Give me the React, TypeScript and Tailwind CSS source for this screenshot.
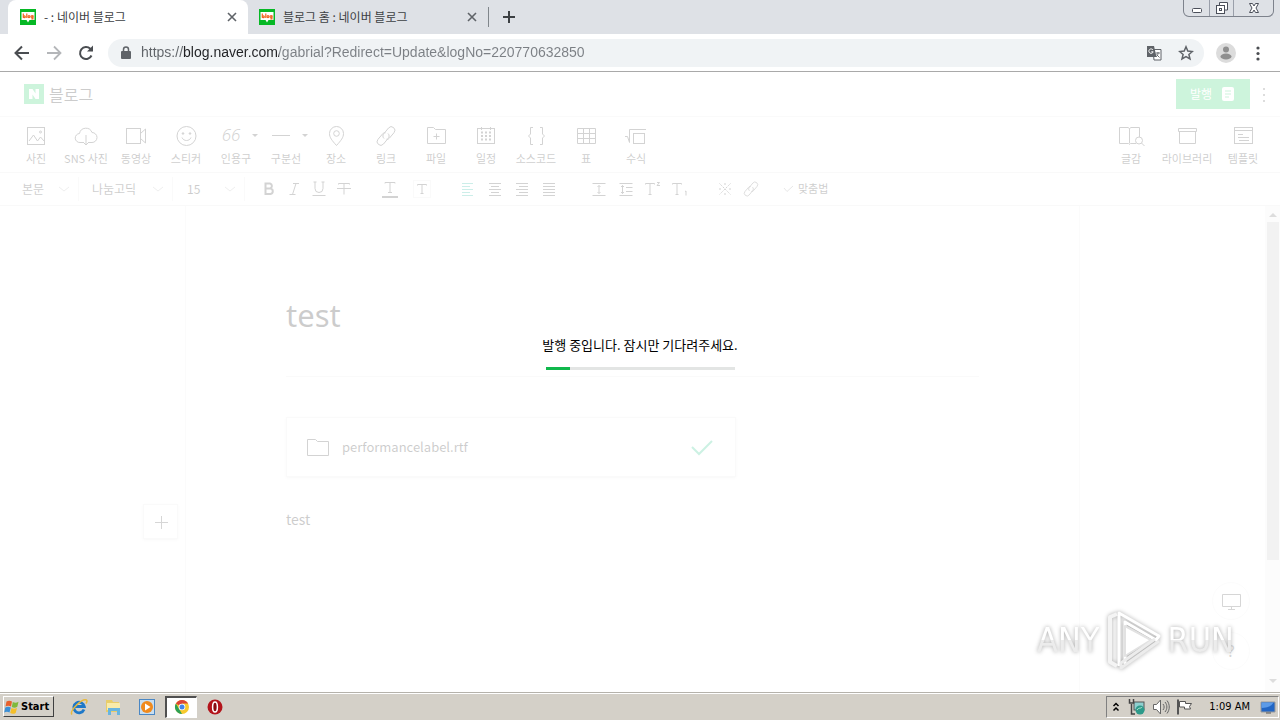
import type { ReactNode } from 'react';
import clsx from 'clsx';

type IconProps = { children: ReactNode; className?: string; box?: string };

function Line({ children, className = 'size-6', box = '0 0 24 24' }: IconProps) {
  return (
    <svg
      viewBox={box}
      className={className}
      fill="none"
      stroke="currentColor"
      strokeWidth="1"
      aria-hidden="true"
    >
      {children}
    </svg>
  );
}

function BlogFavicon() {
  return (
    <svg viewBox="0 0 16 16" className="size-4 shrink-0" aria-hidden="true">
      <rect width="16" height="16" fill="#06b825" />
      <path d="M1.5 3h13v8H9.5L8 13.5 6.5 11h-5z" fill="#fff" />
      <g fill="none" stroke="#f26522" strokeWidth="1.2">
        <path d="M3.3 4.5v4.3M6.8 4.5v4.5" />
        <circle cx="4.4" cy="7.7" r="0.9" />
        <circle cx="9" cy="7.6" r="1" />
        <path d="M12.9 6.3v3.5h-1.6" />
        <circle cx="12" cy="7.4" r="0.9" />
      </g>
    </svg>
  );
}

function Tab({ title, active }: { title: string; active?: boolean }) {
  return (
    <div
      className={clsx(
        'flex h-full w-60 items-center rounded-t-lg pr-2 text-[12px] text-[#3c4043]',
        active ? 'bg-white pl-3' : 'pl-[11px]',
      )}
    >
      <BlogFavicon />
      <button role="tab" aria-selected={!!active} className="ml-2 flex-1 truncate text-left">
        {title}
      </button>
      <button aria-label="Close tab" className="text-[#5f6368]">
        <svg viewBox="0 0 16 16" className="size-4" stroke="currentColor" strokeWidth="1.6">
          <path d="m4 4 8 8M12 4l-8 8" />
        </svg>
      </button>
    </div>
  );
}

function WindowControls() {
  return (
    <div className="mr-[6px] flex h-[17px] self-start rounded-b-md border border-t-0 border-[#7d828c] text-[#4b4f5a]">
      <button aria-label="Minimize" className="flex w-[25px] items-center justify-center">
        <Line className="h-4 w-4" box="0 0 16 16">
          <rect x="3.5" y="8.5" width="9" height="4" rx="1" fill="#fff" />
        </Line>
      </button>
      <button
        aria-label="Restore"
        className="flex w-[25px] items-center justify-center border-x border-[#9a9faa]"
      >
        <Line className="h-4 w-4" box="0 0 16 16">
          <path d="M5.500 5V2.500h8V10H11" fill="#fff" />
          <rect x="2.500" y="5.500" width="8" height="8" fill="#fff" />
          <rect x="5.500" y="8.500" width="2" height="2" />
        </Line>
      </button>
      <button aria-label="Close" className="flex w-[39px] items-center justify-center">
        <Line className="h-4 w-4" box="0 0 16 16">
          <path
            d="M3.500 3.500h3l1.500 2.500 1.500-2.500h3L10 8l2.500 4.500h-3L8 10l-1.500 2.500h-3L6 8z"
            fill="#fff"
          />
        </Line>
      </button>
    </div>
  );
}

function BrowserChrome() {
  return (
    <header>
      <div className="flex h-[34px] items-center bg-[#dee1e6] pl-2">
        <div role="tablist" className="flex h-full">
          <Tab title="- : 네이버 블로그" active />
          <Tab title="블로그 홈 : 네이버 블로그" />
        </div>
        <span className="h-5 w-px bg-[#80868b]" />
        <button aria-label="New tab" className="ml-[10px] text-[#3c4043]">
          <svg viewBox="0 0 20 20" className="size-5" stroke="currentColor" strokeWidth="2">
            <path d="M10 4v12M4 10h12" />
          </svg>
        </button>
        <div className="flex-1" />
        <WindowControls />
      </div>
      <div className="flex h-[38px] items-center border-b border-[#a9a9a9] bg-white pl-3 pr-3 text-[#5f6368]">
        <button aria-label="Back" className="text-[#4a4d51]">
          <svg viewBox="0 0 20 20" className="size-5" fill="none" stroke="currentColor" strokeWidth="2">
            <path d="M17 10H4M10 3.500 3.500 10l6.500 6.500" />
          </svg>
        </button>
        <button aria-label="Forward" className="ml-3 text-[#b4b6b9]">
          <svg viewBox="0 0 20 20" className="size-5" fill="none" stroke="currentColor" strokeWidth="1.800">
            <path d="M3 10h13M10 3.500l6.500 6.500-6.500 6.500" />
          </svg>
        </button>
        <button aria-label="Reload" className="ml-3 text-[#4a4d51]">
          <svg viewBox="0 0 20 20" className="size-5" fill="none" stroke="currentColor" strokeWidth="2">
            <path d="M15.500 12.500A6 6 0 1 1 14.300 5.800L16 7.500" />
            <path d="M17 2.500v6h-6z" fill="currentColor" stroke="none" />
          </svg>
        </button>
        <div className="ml-3 flex h-7 flex-1 items-center rounded-full bg-[#f0f3f5] pl-3 pr-[10px]">
          <svg viewBox="0 0 12 16" className="h-4 w-3" aria-hidden="true">
            <rect x="1" y="6" width="10" height="8" rx="1" fill="#5f6368" />
            <path d="M3.500 6.500V4.500a2.500 2.500 0 0 1 5 0v2" fill="none" stroke="#5f6368" strokeWidth="1.500" />
          </svg>
          <input
            aria-label="Address"
            readOnly
            value="https://blog.naver.com/gabrial?Redirect=Update&logNo=220770632850"
            className="ml-[9px] min-w-0 flex-1 bg-[linear-gradient(90deg,#5f6368_42px,#202124_42px,#202124_138px,#7b7f84_138px)] bg-clip-text font-['Liberation_Sans'] text-[14px] text-transparent outline-none"
          />
          <button aria-label="Translate" className="size-4">
            <svg viewBox="0 0 16 16" className="size-4">
              <path d="M7 4.500h8v10.500H8z" fill="#fff" stroke="#5f6368" />
              <path d="M1 1h7l2.500 11H1z" fill="#5f6368" />
              <path d="M7 5A2.200 2.200 0 1 0 7.200 6.800H5.300" fill="none" stroke="#fff" />
              <path d="M9.500 8h4.500M12 7v1c0 2-1 3-2 4M10.500 9.500l3 3" fill="none" stroke="#5f6368" strokeWidth="0.900" />
            </svg>
          </button>
          <button aria-label="Bookmark" className="ml-4 size-4">
            <svg viewBox="0 0 16 16" className="size-4" fill="none" stroke="#5f6368" strokeWidth="1.500">
              <path d="m8 1.800 1.800 4.300 4.600.4-3.500 3 1.100 4.500L8 11.600 4 14l1.100-4.500-3.500-3 4.600-.4z" />
            </svg>
          </button>
        </div>
        <button aria-label="Profile" className="ml-3 size-5">
          <svg viewBox="0 0 20 20" className="size-5">
            <circle cx="10" cy="10" r="10" fill="#dcdcdc" />
            <circle cx="10" cy="6.500" r="3" fill="#8f8f8f" />
            <ellipse cx="10" cy="13.500" rx="5.500" ry="3" fill="#8f8f8f" />
          </svg>
        </button>
        <button aria-label="Menu" className="ml-3 size-5">
          <svg viewBox="0 0 20 20" className="size-5" fill="#4a4d51">
            <circle cx="10" cy="5" r="1.600" />
            <circle cx="10" cy="10.500" r="1.600" />
            <circle cx="10" cy="16" r="1.600" />
          </svg>
        </button>
      </div>
    </header>
  );
}

const link = (
  <>
    <path d="M10 14.500c-1.500-1.500-1.500-3.500 0-5l4.500-5.500a3.600 3.600 0 0 1 5.500 4.700L15.500 14c-1 1.200-2 1.500-3 1.200" />
    <path d="M14 9.500c1.500 1.500 1.500 3.500 0 5L9.500 20A3.600 3.600 0 0 1 4 15.300L8.500 10c1-1.200 2-1.500 3-1.200" />
  </>
);

const caret = <path d="M0 0h6L3 3z" fill="currentColor" stroke="none" />;

const insertTools: { label: string; icon: ReactNode }[] = [
  {
    label: '사진',
    icon: (
      <Line>
        <rect x="3.500" y="3.500" width="17" height="17" />
        <path d="m5 17 4.500-6 4 6 3-4 3.500 4" />
        <circle cx="16.500" cy="8" r="1" />
      </Line>
    ),
  },
  {
    label: 'SNS 사진',
    icon: (
      <Line>
        <path d="M9 18.500H6a4.500 4.500 0 0 1-.5-9 6.500 6.500 0 0 1 12.500-1 5 5 0 0 1 0 10h-3" />
        <path d="M12 11v10M9 18l3 3 3-3" />
      </Line>
    ),
  },
  {
    label: '동영상',
    icon: (
      <Line>
        <rect x="2.500" y="4.500" width="14" height="15" />
        <path d="M16.500 9.500 21.500 5v14l-5-4.500" />
      </Line>
    ),
  },
  {
    label: '스티커',
    icon: (
      <Line>
        <circle cx="12.500" cy="12" r="9.500" />
        <path d="M8 13.500c1.500 4 7.500 4 9 0" />
        <circle cx="9" cy="9.500" r="0.800" fill="currentColor" />
        <circle cx="16" cy="9.500" r="0.800" fill="currentColor" />
      </Line>
    ),
  },
  {
    label: '인용구',
    icon: (
      <span className="flex h-6 items-center gap-3 pl-2 pb-[2px]">
        <span className="font-['Noto_Sans'] text-[17px] font-light italic">66</span>
        <Line className="h-[3px] w-[6px]" box="0 0 6 3">{caret}</Line>
      </span>
    ),
  },
  {
    label: '구분선',
    icon: (
      <span className="flex h-6 items-center gap-3 pl-2 pb-[2px]">
        <span className="h-px w-[18px] bg-current" />
        <Line className="h-[3px] w-[6px]" box="0 0 6 3">{caret}</Line>
      </span>
    ),
  },
  {
    label: '장소',
    icon: (
      <Line>
        <path d="M12.500 21.500C8 16.500 5.500 13.500 5.500 9.500a7 7 0 0 1 14 0c0 4-2.500 7-7 12z" />
        <circle cx="12.500" cy="9.500" r="2.800" />
      </Line>
    ),
  },
  { label: '링크', icon: <Line>{link}</Line> },
  {
    label: '파일',
    icon: (
      <Line>
        <path d="M3.500 19.500v-16h6l2 2h10v14zM12.500 9.500v6M9.500 12.500h6" />
      </Line>
    ),
  },
  {
    label: '일정',
    icon: (
      <Line>
        <rect x="3.500" y="4.500" width="17" height="15" />
        <path d="M7.500 3v3M16.500 3v3" />
        <path d="M7 8.500h10.500M7 12h10.500M7 15.500h10.500" strokeWidth="2" strokeDasharray="2 2" />
      </Line>
    ),
  },
  {
    label: '소스코드',
    icon: (
      <Line>
        <path d="M9 3.500H6.500v6.500L4.500 12l2 2v6.500H9M16 3.500h2.500v6.500l2 2-2 2v6.500H16" />
      </Line>
    ),
  },
  {
    label: '표',
    icon: (
      <Line>
        <path d="M3.500 4.500h18v15h-18zM3.500 9.500h18M3.500 14.500h18M9.500 4.500v15M15.500 4.500v15" />
      </Line>
    ),
  },
  {
    label: '수식',
    icon: (
      <Line>
        <path d="M1 12.500h2.500l2 6v-13h16.500" />
        <rect x="9.500" y="9.500" width="11" height="10" />
      </Line>
    ),
  },
];

const sideTools: { label: string; icon: ReactNode }[] = [
  {
    label: '글감',
    icon: (
      <Line className="h-6 w-7" box="0 0 28 24">
        <path d="M12.500 4.500v15M19 19.500h-5.500l-1 1-1-1H2.500v-16H11l1.500 1 1.500-1h8.500V13" />
        <circle cx="22" cy="16.500" r="3.500" />
        <path d="m24.500 19 3 3" />
      </Line>
    ),
  },
  {
    label: '라이브러리',
    icon: (
      <Line>
        <path d="M3.500 4.500h18v3h-18zM4.500 7.500v12h16v-12" />
      </Line>
    ),
  },
  {
    label: '템플릿',
    icon: (
      <Line>
        <rect x="3.500" y="3.500" width="18" height="16" />
        <path d="M3.500 6.500h18M7 10.500h5M7 13.500h11M8 16.500h10" />
      </Line>
    ),
  },
];

function ToolButton({ label, icon, wide }: { label: string; icon: ReactNode; wide?: boolean }) {
  return (
    <button
      className={clsx(
        'flex flex-col items-center whitespace-nowrap text-[11px] leading-4 text-[#222]',
        wide ? 'w-14' : 'w-[50px]',
      )}
    >
      {icon}
      <span className="mt-[2px] text-black">{label}</span>
    </button>
  );
}

function FormatSelect({ label, value, className }: { label: string; value: string; className: string }) {
  return (
    <div className={clsx('flex h-6 items-center border-r border-[#e8e8e8] pr-2', className)}>
      <select
        aria-label={label}
        defaultValue={value}
        className="min-w-0 flex-1 appearance-none text-[12px] text-black outline-none"
      >
        <option>{value}</option>
      </select>
      <Line className="size-3 shrink-0 text-[#aaa]" box="0 0 12 12">
        <path d="m1 4 5 4 5-4" />
      </Line>
    </div>
  );
}

const serifT = 'M5 4.500V3.500h10v1M10 3.500v10M8 13.500h4';

const textStyles = [
  { label: '굵게', node: <path d="M6.500 4.500H11a2.600 2.600 0 0 1 0 5H6.500zM6.500 9.500h5a2.800 2.800 0 0 1 0 5.500h-5z" strokeWidth="2" /> },
  { label: '기울임꼴', node: <path d="M9 4.500h6M5.500 15.500h6M12 4.500l-3.500 11" /> },
  { label: '밑줄', node: <path d="M6 3v6.500a4 4 0 0 0 8 0V3M4.500 3h3M12.500 3h3M3.500 16.500h13" /> },
  { label: '취소선', node: <path d="M4.500 5.500v-1h11v1M10 4.500v11M3 9.500h14" /> },
];

const colorStyles = [
  {
    label: '글자색',
    node: (
      <>
        <path d={serifT} />
        <path d="M2 18h16" strokeWidth="2" />
      </>
    ),
  },
  {
    label: '글자 배경색',
    node: (
      <>
        <rect x="1.500" y="1.500" width="17" height="17" stroke="#e4e4e4" />
        <path d="M5.500 6.500v-1h9v1M10 5.500v9M8.500 14.500h3" />
      </>
    ),
  },
];

const aligns = [
  { label: '왼쪽 정렬', node: <path stroke="#00a98f" d="M4 4.500h11M4 7.500h8M4 10.500h11M4 13.500h8M4 16.500h11" /> },
  { label: '가운데 정렬', node: <path d="M4 4.500h12M6 7.500h8M4 10.500h12M6 13.500h8M4 16.500h12" /> },
  { label: '오른쪽 정렬', node: <path d="M4 4.500h12M7 7.500h9M4 10.500h12M7 13.500h9M4 16.500h12" /> },
  { label: '양쪽 정렬', node: <path d="M4 4.500h12M4 7.500h12M4 10.500h12M4 13.500h12M4 16.500h12" /> },
];

const spacings = [
  { label: '줄 간격', node: <path d="M3.500 4.500h13M3.500 16.500h13M10 6.500v8M8.500 8l1.500-1.500L11.500 8M8.500 13l1.500 1.500 1.500-1.500" /> },
  { label: '들여쓰기', node: <path d="M3.500 4.500h13M3.500 16.500h13M6.500 6.500v8M5 8l1.500-1.500L8 8M5 13l1.500 1.500L8 13M10 8.500h6.500M10 12.500h6.500" /> },
  { label: '위 첨자', node: <path d="M2.500 5.500v-1h9v1M7 4.500v11M5.500 15.500h3M14 3.500h2.500l-2.500 3h3" /> },
  { label: '아래 첨자', node: <path d="M2.500 5.500v-1h9v1M7 4.500v11M5.500 15.500h3M15 12.500l1-.5v4.500" /> },
];

const extras = [
  {
    label: '특수문자',
    node: (
      <>
        <path d="m4.500 4.500 11 11M15.500 4.500l-11 11" strokeDasharray="1.500 1" />
        <path d="M9 5h2M9 15h2M5 9v2M15 9v2" />
      </>
    ),
  },
  { label: '링크 추가', node: <g transform="translate(1 1) scale(.75)">{link}</g> },
];

function FormatGroup({
  items,
  className,
  cell,
}: {
  items: { label: string; node: ReactNode }[];
  className?: string;
  cell: string;
}) {
  return (
    <div className={clsx('flex text-[#222]', className)}>
      {items.map((item) => (
        <button key={item.label} aria-label={item.label} className={clsx('flex justify-center', cell)}>
          <Line className="size-5" box="0 0 20 20">{item.node}</Line>
        </button>
      ))}
    </div>
  );
}

function EditorHeader() {
  return (
    <>
      <div className="flex h-11 items-center pl-6 pr-[6px]">
        <a href="#" className="flex items-center text-[16px] leading-5 text-black">
          <svg viewBox="0 0 20 20" className="mr-[5px] size-5" aria-hidden="true">
            <rect width="20" height="20" fill="#03c750" />
            <path d="M5 5h3.500l3 4.500V5H15v10h-3.500l-3-4.500V15H5z" fill="#fff" />
          </svg>
          블로그
        </a>
        <button className="ml-auto flex h-[30px] w-[74px] items-center justify-center gap-2 bg-[#03c750] text-[12px] text-white">
          발행
          <svg viewBox="0 0 16 16" className="size-4" aria-hidden="true">
            <rect x="2" y="1" width="12" height="14" rx="2" fill="#fff" />
            <path d="M5 5h6M5 8h6M5 11h4" stroke="#03c750" />
          </svg>
        </button>
        <button aria-label="더보기" className="ml-1 size-5">
          <svg viewBox="0 0 20 20" className="size-5" fill="#555">
            <path d="M9 4h2v2H9zM9 10h2v2H9zM9 16h2v2H9z" />
          </svg>
        </button>
      </div>
      <div className="flex h-14 justify-between border-t border-[#e5e5e5] pl-[11px] pr-[9px] pt-[7px]">
        <div className="flex">
          {insertTools.map((tool) => (
            <ToolButton key={tool.label} {...tool} />
          ))}
        </div>
        <div className="flex">
          {sideTools.map((tool) => (
            <ToolButton key={tool.label} {...tool} wide />
          ))}
        </div>
      </div>
      <div className="flex h-[34px] items-center border-y border-[#e0e0e0] pb-px pl-[22px]">
        <FormatSelect label="문단 서식" value="본문" className="w-[57px]" />
        <FormatSelect label="글꼴" value="나눔고딕" className="w-[94px] pl-[13px]" />
        <FormatSelect label="글자 크기" value="15" className="w-[72px] pl-[14px]" />
        <FormatGroup items={textStyles} className="ml-[11px]" cell="w-[25px]" />
        <FormatGroup items={colorStyles} className="ml-[18px]" cell="w-8" />
        <FormatGroup items={aligns} className="ml-4" cell="w-[27px]" />
        <FormatGroup items={spacings} className="ml-[23px]" cell="w-[27px]" />
        <FormatGroup items={extras} className="ml-[19px]" cell="w-[26px]" />
        <button className="ml-[18px] flex items-center gap-1 text-[11px] text-black">
          <Line className="size-3 text-[#888]" box="0 0 12 12">
            <path d="m2 5 3 3.500L11 3" />
          </Line>
          맞춤법
        </button>
      </div>
    </>
  );
}

function Editor() {
  return (
    <div className="flex flex-1">
      <aside className="flex w-[186px] shrink-0 items-start justify-end border-r border-[#ececec] pr-[7px] pt-[298px]">
        <button
          aria-label="추가"
          className="flex size-[35px] items-center justify-center border border-[#e8e8e8] text-[#333] shadow-sm"
        >
          <Line>
            <path d="M12.500 6v13M6 12.500h13" />
          </Line>
        </button>
      </aside>
      <main className="min-w-0 flex-1 px-[100px] pt-[82px]">
        <div className="border-b border-[#e5e5e5] pb-[34px]">
          <input
            aria-label="제목"
            defaultValue="test"
            className="block h-[54px] w-full font-['Noto_Sans'] text-[31px] text-black outline-none"
          />
        </div>
        <div className="mt-10 flex h-[60px] w-[450px] items-center border border-[#e8e8e8] px-5 shadow-sm">
          <Line className="size-6 text-[#222]">
            <path d="M.5 20.500v-16h8l2 2h11v14z" />
          </Line>
          <a href="#" className="ml-[11px] flex-1 text-[13px] leading-5 text-black">
            performancelabel.rtf
          </a>
          <svg viewBox="0 0 24 24" className="size-6" fill="none" stroke="#00b873" strokeWidth="2">
            <path d="m1 12 7 7L21 6" />
          </svg>
        </div>
        <textarea
          aria-label="본문 내용"
          defaultValue="test"
          rows={1}
          className="mt-8 block w-full resize-none text-[14px] leading-5 text-black outline-none"
        />
      </main>
      <aside className="flex w-[186px] shrink-0 flex-col items-end justify-end gap-3 border-l border-[#ececec] pb-[22px] pr-[15px] text-[#333]">
        <button
          aria-label="미리보기"
          className="flex size-[38px] items-center justify-center rounded-full border border-[#eee]"
        >
          <Line>
            <path d="M3.500 5.500h18v12h-18zM12.500 17.500v3M9 20.500h7" />
          </Line>
        </button>
        <button
          aria-label="도움말"
          className="size-[38px] rounded-full border border-[#eee] font-['Noto_Sans'] text-[16px]"
        >
          ?
        </button>
      </aside>
      <div className="flex w-[15px] shrink-0 flex-col items-center bg-[#f1f1f1] text-[#555]">
        <svg viewBox="0 0 16 16" className="size-4" fill="currentColor" aria-hidden="true">
          <path d="M4 11h8L8 7z" />
        </svg>
        <div className="h-[338px] w-3 bg-[#bdbdbd]" />
        <svg viewBox="0 0 16 16" className="mt-auto mb-1 size-4" fill="currentColor" aria-hidden="true">
          <path d="M4 7h8l-4 4z" />
        </svg>
      </div>
    </div>
  );
}

function PublishingOverlay() {
  const progress = 13;

  return (
    <div className="absolute inset-0 flex flex-col items-center bg-white/80 pt-[264px]">
      <p id="publishing" className="text-[13px] leading-[18px] text-black">
        발행 중입니다. 잠시만 기다려주세요.
      </p>
      <div
        role="progressbar"
        aria-labelledby="publishing"
        aria-valuenow={progress}
        className="mt-[13px] h-[3px] w-[189px] bg-[#e3e5e4]"
      >
        <div className="h-full bg-[#10b84c]" style={{ width: `${progress}%` }} />
      </div>
    </div>
  );
}

function Watermark() {
  const word =
    "bg-[linear-gradient(180deg,#fff_50%,#ececec_50%)] bg-clip-text font-['DejaVu_Sans_Condensed'] text-[34px] leading-[48px] text-transparent";

  return (
    <div className="absolute right-[46px] bottom-5 flex items-center drop-shadow-[0_0_2px_#aaa]">
      <span className={word}>ANY</span>
      <svg
        viewBox="0 0 60 64"
        className="mx-1 h-16 w-[60px]"
        fill="none"
        strokeWidth="4"
        strokeLinejoin="round"
        aria-hidden="true"
      >
        <path d="M14 6 7 9v45l7 4" stroke="#f4f4f4" />
        <path d="M16 58V5l40 23-3 4L22 14v42" stroke="#fff" strokeWidth="3" />
        <path d="M22 18 48 32 22 48z" fill="#fff" stroke="#e2e2e2" strokeWidth="2" />
        <path d="M56 33 18 60v-5l34-24" stroke="#ececec" strokeWidth="3" />
      </svg>
      <span className={word}>RUN</span>
    </div>
  );
}

function Taskbar() {
  return (
    <footer className="flex h-7 shrink-0 items-center border-t border-[#b5b2ab] bg-[#d4d0c8] pl-[3px] pr-px font-['DejaVu_Sans_Condensed'] text-[11px] text-black shadow-[inset_0_1px_#fff]">
      <button className="flex h-[21px] w-[51px] items-center gap-px border border-t-white border-r-[#404040] border-b-[#404040] border-l-white pt-px font-bold">
        <svg viewBox="0 0 16 16" className="size-4 shrink-0" aria-hidden="true">
          <path d="M2.500 2.500c2-1.300 3.800-1 5.500 0L7 7.500c-1.700-1-3.500-1.200-5.500 0z" fill="#e8602c" />
          <path d="M8.800 3c1.700 1 3.700 1 5.700-.2l-1.200 5c-2 1.200-3.800 1-5.500.2z" fill="#7fb93c" />
          <path d="M1.300 8.500c2-1.200 3.800-1 5.500 0l-1.300 5c-1.700-1-3.500-1-5.300.1z" fill="#3b8fd6" />
          <path d="M7.500 9c1.700.900 3.500 1 5.500-.1l-1.300 5c-2 1.200-3.800 1-5.500 0z" fill="#f5bf2a" />
        </svg>
        Start
      </button>
      <nav className="ml-[9px] flex items-center gap-[2px]">
        <button aria-label="Internet Explorer" className="flex h-[22px] w-8 items-center justify-center">
          <svg viewBox="0 0 18 18" className="size-[18px]" fill="none">
            <path d="M14 11.500a5.300 5.300 0 1 1 .3-3H5" stroke="#1e78c8" strokeWidth="2.800" />
            <path d="M2 16.500C-1 13 12 0 16.500 2c1 .8.500 2-.5 3.500" stroke="#e9b93a" strokeWidth="1.500" />
          </svg>
        </button>
        <button aria-label="Explorer" className="flex h-[22px] w-8 items-center justify-center">
          <svg viewBox="0 0 18 18" className="size-[18px]">
            <path d="M2 2h6l1 2h6v10H2z" fill="#e8cd6a" />
            <path d="M3 5h13v7H3z" fill="#f8ebaa" />
            <path d="M4 10h12v7h-3v-4H7v4H4z" fill="#68b5e0" />
          </svg>
        </button>
        <button aria-label="Media Player" className="flex h-[22px] w-8 items-center justify-center">
          <svg viewBox="0 0 18 18" className="size-[18px]">
            <rect x="1.500" y="1.500" width="15" height="15" fill="#c8def0" stroke="#4a87c4" />
            <circle cx="9" cy="9" r="6" fill="#f08a1d" />
            <path d="M7 5.500 12.500 9 7 12.500z" fill="#fff" />
          </svg>
        </button>
        <button
          aria-label="Chrome"
          className="flex h-[22px] w-8 items-center justify-center border border-t-2 border-l-2 border-[#fff] border-t-[#505050] border-l-[#505050] bg-white"
        >
          <svg viewBox="0 0 16 16" className="size-4">
            <circle cx="8" cy="8" r="7" fill="#f7c92d" />
            <path d="M8 8 1.900 4.500A7 7 0 0 1 14.100 4.500H8z" fill="#dc4437" />
            <path d="M1.900 4.500 6 11.500 8 15A7 7 0 0 1 1.900 4.500z" fill="#2da055" />
            <circle cx="8" cy="8" r="3.300" fill="#fff" />
            <circle cx="8" cy="8" r="2.500" fill="#4384e8" />
          </svg>
        </button>
        <button aria-label="Opera" className="flex h-[22px] w-8 items-center justify-center">
          <svg viewBox="0 0 16 16" className="size-4">
            <circle cx="8" cy="8" r="7.500" fill="#b3141b" />
            <ellipse cx="8" cy="8" rx="2.400" ry="5" fill="#8a0d12" stroke="#fff" strokeWidth="1.500" />
          </svg>
        </button>
      </nav>
      <div className="ml-auto flex h-[22px] items-center border border-t-[#808080] border-r-white border-b-white border-l-[#808080] pl-[3px]">
        <button aria-label="Show hidden icons" className="size-3">
          <svg viewBox="0 0 12 12" className="size-3" fill="none" stroke="#000" strokeWidth="1.500">
            <path d="m3.500 5 2.500-2.500L8.500 5M3.500 9.500 6 7l2.500 2.500" />
          </svg>
        </button>
        <svg viewBox="0 0 18 18" className="ml-[6px] size-[18px]" aria-hidden="true">
          <rect x="6" y="4" width="10" height="8" fill="#8fd0d0" stroke="#555" />
          <circle cx="12" cy="12" r="4.500" fill="#2d9a8a" />
          <path d="M9 12c2-3 4-1 5-3" stroke="#b8ead5" fill="none" />
          <path d="M1.500 1v4h4V1M3.500 6v10H7" stroke="#444" fill="none" strokeWidth="1.500" />
        </svg>
        <svg viewBox="0 0 18 18" className="ml-[6px] size-[18px]" fill="none" stroke="#666" aria-hidden="true">
          <path d="M1.500 6.500h3L8.500 2v14l-4-4.500h-3z" fill="#fff" />
          <path d="M11 6c1.500 2 1.500 4 0 6M13 4c2.500 3 2.500 7 0 10M15 2.500c3 4 3 9 0 13" />
        </svg>
        <svg viewBox="0 0 18 18" className="ml-[6px] size-[18px]" fill="#fff" stroke="#555" aria-hidden="true">
          <path d="M2 1.500v15" strokeWidth="2" />
          <path d="M3.500 3.500h6v2h6l-2 3 1 2.500h-6v-2h-5z" />
        </svg>
        <time className="ml-[15px] pt-px">1:09 AM</time>
        <svg viewBox="0 0 16 16" className="mr-[2px] ml-[10px] size-4" aria-hidden="true">
          <path d="M1 3h14v10H1z" fill="#2266c4" stroke="#9a9a9a" />
          <path d="M1.500 3.500h12C11 8 6 9 1.500 9z" fill="#5c9be8" />
          <path d="M6 14h5" stroke="#555" />
        </svg>
      </div>
    </footer>
  );
}

export default function App() {
  return (
    <div className="flex min-h-screen flex-col bg-white font-['Noto_Sans_CJK_KR',sans-serif]">
      <BrowserChrome />
      <div className="relative flex flex-1 flex-col">
        <EditorHeader />
        <Editor />
        <PublishingOverlay />
        <Watermark />
      </div>
      <Taskbar />
    </div>
  );
}
